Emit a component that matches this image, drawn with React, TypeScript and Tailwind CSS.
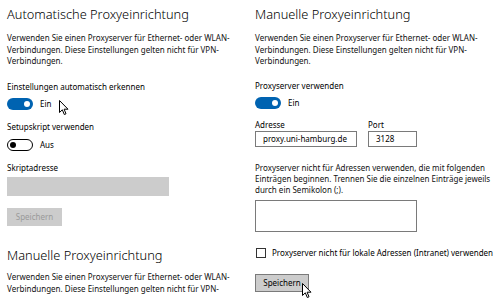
import React from "react";

const Cursor = ({ className }: { className: string }) => (
  <svg className={className} width="10" height="16" viewBox="0 0 10 16">
    <path d="M0.5 0.5 L0.5 12.5 L3.3 9.8 L5.3 14.5 L7 13.8 L5.1 9.2 L9 9.2 Z" fill="#fff" stroke="#000" strokeWidth="1" strokeLinejoin="round" />
  </svg>
);

const ToggleOn = () => (
  <div className="w-[26px] h-[12px] rounded-full bg-[#0063b1] relative shrink-0">
    <div className="absolute right-[3px] top-[3px] w-[6px] h-[6px] rounded-full bg-white" />
  </div>
);

const ToggleOff = () => (
  <div className="w-[26px] h-[12px] rounded-full border border-black bg-white relative shrink-0">
    <div className="absolute left-[2px] top-[2px] w-[6px] h-[6px] rounded-full bg-black" />
  </div>
);

const Para = ({ lines, lh = "leading-[11.5px]", mt }: { lines: string[]; lh?: string; mt: string }) => (
  <div className={`${mt} text-[8px] ${lh} whitespace-nowrap text-[#111]`}>
    {lines.map((l, i) => (
      <div key={i}>{l}</div>
    ))}
  </div>
);

const Title = ({ children, mt }: { children: React.ReactNode; mt: string }) => (
  <div className={`${mt} h-[22px] leading-[22px] text-[12.8px] font-light whitespace-nowrap`}>{children}</div>
);

const Label = ({ children, mt }: { children: React.ReactNode; mt: string }) => (
  <div className={`${mt} h-[12px] leading-[12px] text-[8px] whitespace-nowrap`}>{children}</div>
);

export default function App() {
  const intro = [
    "Verwenden Sie einen Proxyserver für Ethernet- oder WLAN-",
    "Verbindungen. Diese Einstellungen gelten nicht für VPN-",
    "Verbindungen.",
  ];
  return (
    <div
      className="w-[500px] h-[300px] overflow-hidden bg-white flex text-black"
      style={{ fontFamily: '"Noto Sans", "Open Sans", sans-serif' }}
    >
      {/* Left column */}
      <div className="w-[255px] pl-[7px] shrink-0">
        <Title mt="mt-[3px]">Automatische Proxyeinrichtung</Title>
        <Para lines={intro} mt="mt-[7px]" />
        <Label mt="mt-[14.5px]">Einstellungen automatisch erkennen</Label>
        <div className="mt-[4px] h-[13px] flex items-center gap-[7px]">
          <ToggleOn />
          <span className="text-[8px] leading-[12px]">Ein</span>
          <Cursor className="ml-[1px] mt-[8px]" />
        </div>
        <Label mt="mt-[11px]">Setupskript verwenden</Label>
        <div className="mt-[6px] h-[12px] flex items-center gap-[7px]">
          <ToggleOff />
          <span className="text-[8px] leading-[12px]">Aus</span>
        </div>
        <Label mt="mt-[11px]">Skriptadresse</Label>
        <div className="mt-[3px] w-[162px] h-[19px] bg-[#cccccc]" />
        <div className="mt-[12px] w-[55px] h-[18px] bg-[#cccccc] flex items-center justify-center text-[8px] text-[#9a9a9a]">
          Speichern
        </div>
        <Title mt="mt-[18px]">Manuelle Proxyeinrichtung</Title>
        <Para lines={intro.slice(0, 2)} lh="leading-[12px]" mt="mt-[5px]" />
      </div>

      {/* Right column */}
      <div className="flex-1">
        <Title mt="mt-[3px]">Manuelle Proxyeinrichtung</Title>
        <Para lines={intro} mt="mt-[7px]" />
        <Label mt="mt-[13.5px]">Proxyserver verwenden</Label>
        <div className="mt-[4.5px] h-[13px] flex items-center gap-[7px]">
          <ToggleOn />
          <span className="text-[8px] leading-[12px]">Ein</span>
        </div>
        <div className="mt-[9.5px] flex gap-[11px]">
          <div className="flex flex-col">
            <div className="h-[12px] leading-[12px] text-[8px]">Adresse</div>
            <div className="w-[102px] h-[16px] border border-[#7a7a7a] flex items-center pl-[7px] text-[8px] whitespace-nowrap">
              proxy.uni-hamburg.de
            </div>
          </div>
          <div className="flex flex-col">
            <div className="h-[12px] leading-[12px] text-[8px]">Port</div>
            <div className="w-[49px] h-[16px] border border-[#7a7a7a] flex items-center pl-[7px] text-[8px]">
              3128
            </div>
          </div>
        </div>
        <Para
          lines={[
            "Proxyserver nicht für Adressen verwenden, die mit folgenden",
            "Einträgen beginnen. Trennen Sie die einzelnen Einträge jeweils",
            "durch ein Semikolon (;).",
          ]}
          lh="leading-[11px]"
          mt="mt-[14.5px]"
        />
        <div className="mt-[5.5px] w-[162px] h-[32px] border border-[#7a7a7a]" />
        <div className="mt-[15px] h-[12px] flex items-center gap-[6px]">
          <div className="ml-[1px] w-[10px] h-[10px] border border-[#333] bg-white shrink-0" />
          <span className="text-[8px] leading-[12px] whitespace-nowrap">
            Proxyserver nicht für lokale Adressen (Intranet) verwenden
          </span>
        </div>
        <div className="mt-[15px] relative w-[54px] h-[18px] bg-[#cccccc] border border-[#7a7a7a] flex items-center justify-center text-[8px]">
          Speichern
          <Cursor className="absolute left-[46px] top-[8px]" />
        </div>
      </div>
    </div>
  );
}
